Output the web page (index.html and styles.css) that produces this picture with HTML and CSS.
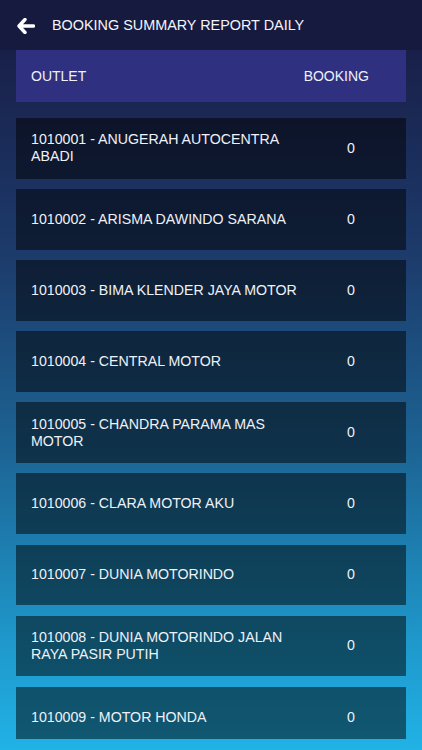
FILE: index.html
```html
<!DOCTYPE html>
<html>
<head>
<meta charset="utf-8">
<link rel="stylesheet" href="styles.css">
</head>
<body>
<div class="screen">
  <header class="topbar">
    <svg class="back" width="18" height="16" viewBox="0 0 18 16"><path d="M8 1.5 L2 8 L8 14.5 M2.5 8 H16.5" fill="none" stroke="#ffffff" stroke-width="3.4" stroke-linecap="round" stroke-linejoin="round"/></svg>
    <span class="title">BOOKING SUMMARY REPORT DAILY</span>
  </header>
  <main class="content">
    <div class="thead">
      <span class="th-outlet">OUTLET</span>
      <span class="th-booking">BOOKING</span>
    </div>
    <div class="list">
      <div class="row"><span class="name">1010001 - ANUGERAH AUTOCENTRA ABADI</span><span class="count">0</span></div>
      <div class="row"><span class="name">1010002 - ARISMA DAWINDO SARANA</span><span class="count">0</span></div>
      <div class="row"><span class="name">1010003 - BIMA KLENDER JAYA MOTOR</span><span class="count">0</span></div>
      <div class="row"><span class="name">1010004 - CENTRAL MOTOR</span><span class="count">0</span></div>
      <div class="row"><span class="name">1010005 - CHANDRA PARAMA MAS MOTOR</span><span class="count">0</span></div>
      <div class="row"><span class="name">1010006 - CLARA MOTOR AKU</span><span class="count">0</span></div>
      <div class="row"><span class="name">1010007 - DUNIA MOTORINDO</span><span class="count">0</span></div>
      <div class="row"><span class="name">1010008 - DUNIA MOTORINDO JALAN RAYA PASIR PUTIH</span><span class="count">0</span></div>
      <div class="row last"><span class="name">1010009 - MOTOR HONDA</span><span class="count">0</span></div>
    </div>
  </main>
</div>
</body>
</html>
```
FILE: styles.css
```css
html, body {
  margin: 0;
  padding: 0;
}
body {
  font-family: "Liberation Sans", Arial, sans-serif;
  color: #eef1f7;
}
.screen {
  width: 422px;
  height: 750px;
  overflow: hidden;
  display: flex;
  flex-direction: column;
  background: linear-gradient(180deg, #161a40 0px, #1a2550 90px, #1c3a6a 250px, #1c6494 450px, #1f9acd 650px, #21b2e6 750px);
}
.topbar {
  height: 50px;
  flex: none;
  display: flex;
  align-items: center;
  background: #161a3f;
}
.back {
  margin-left: 17px;
  margin-top: 1px;
}
.title {
  margin-left: 17px;
  font-size: 14.4px;
  color: #f4f5fa;
}
.content {
  padding: 0 16px;
}
.thead {
  height: 52px;
  background: #2f3080;
  display: flex;
  align-items: center;
  font-size: 14px;
  color: #eef0fa;
}
.th-outlet {
  margin-left: 15px;
  flex: 1;
}
.th-booking {
  margin-right: 37px;
}
.list {
  margin-top: 16px;
  display: flex;
  flex-direction: column;
  gap: 10.6px;
}
.row {
  height: 60.5px;
  background: rgba(0, 0, 0, 0.5);
  display: flex;
  align-items: center;
  font-size: 14.2px;
  line-height: 17px;
}
.row.last {
  height: 52px;
  box-sizing: border-box;
  padding-top: 10px;
}
.name {
  width: 275px;
  padding-left: 15px;
  flex: none;
}
.count {
  flex: 1;
  text-align: center;
  padding-right: 10px;
}
```
